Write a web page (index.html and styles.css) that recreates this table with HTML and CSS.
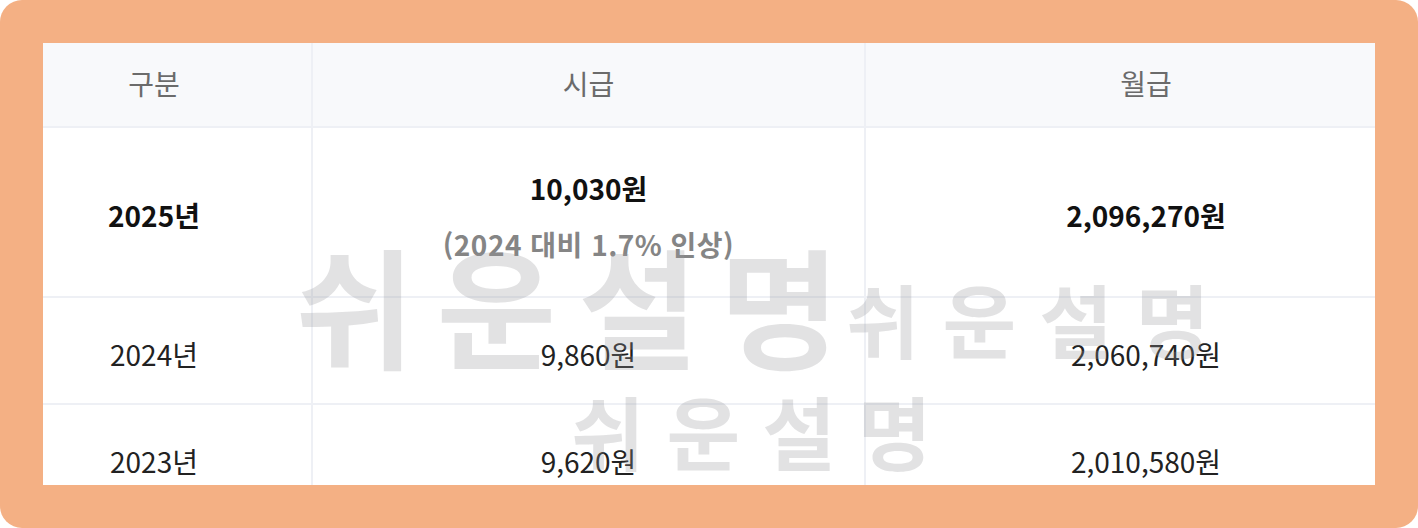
FILE: index.html
```html
<!DOCTYPE html>
<html lang="ko">
<head>
<meta charset="utf-8">
<link rel="stylesheet" href="styles.css">
</head>
<body>
<div class="frame">
  <div class="panel">
    <div class="table">
      <div class="cell head">구분</div>
      <div class="cell head">시급</div>
      <div class="cell head">월급</div>

      <div class="cell row1 strong">2025년</div>
      <div class="cell row1 stack">
        <span class="strong">10,030원</span>
        <span class="sub">(2024 대비 1.7% 인상)</span>
      </div>
      <div class="cell row1 strong">2,096,270원</div>

      <div class="cell row">2024년</div>
      <div class="cell row">9,860원</div>
      <div class="cell row">2,060,740원</div>

      <div class="cell row">2023년</div>
      <div class="cell row">9,620원</div>
      <div class="cell row">2,010,580원</div>
    </div>
    <div class="wm wm-big">쉬운설명</div>
    <div class="wm wm-right">쉬운설명</div>
    <div class="wm wm-bottom">쉬운설명</div>
  </div>
</div>
</body>
</html>
```

FILE: styles.css
```css
html, body {
  margin: 0;
  padding: 0;
  background: #ffffff;
}

.frame {
  width: 1418px;
  height: 528px;
  box-sizing: border-box;
  padding: 43px;
  background: #f4b084;
  border-radius: 22px;
}

.panel {
  position: relative;
  width: 100%;
  height: 100%;
  background: #ffffff;
  overflow: hidden;
  font-family: "Noto Sans CJK KR", "Noto Sans", sans-serif;
}

.table {
  display: grid;
  grid-template-columns: 316px 553px 562px;
  grid-template-rows: 85px 170px 107px 107px;
  width: 1431px;
  margin-left: -46px;
}

.cell {
  display: flex;
  align-items: center;
  justify-content: center;
  font-size: 28px;
  color: #222222;
  border-right: 2px solid #eef0f5;
  border-bottom: 2px solid #eef0f5;
  padding-top: 6px;
  box-sizing: border-box;
}

.head {
  background: #f8f9fb;
  color: #6b6b6b;
  padding-top: 0;
  padding-bottom: 4px;
}

.strong {
  font-weight: 700;
  color: #111111;
}

.stack {
  flex-direction: column;
  gap: 16px;
  padding-top: 8px;
}

.sub {
  font-weight: 700;
  color: #858585;
  letter-spacing: 0.5px;
}

.wm {
  position: absolute;
  font-family: "Noto Sans CJK KR", sans-serif;
  font-weight: 700;
  color: rgba(150, 150, 155, 0.28);
  white-space: nowrap;
  line-height: 1;
  pointer-events: none;
}

.wm-big {
  left: 252px;
  top: 194px;
  font-size: 130px;
  letter-spacing: 22px;
}

.wm-right {
  left: 803px;
  top: 234px;
  font-size: 80px;
  letter-spacing: 23px;
}

.wm-bottom {
  left: 528px;
  top: 346px;
  font-size: 80px;
  letter-spacing: 22px;
}
```
